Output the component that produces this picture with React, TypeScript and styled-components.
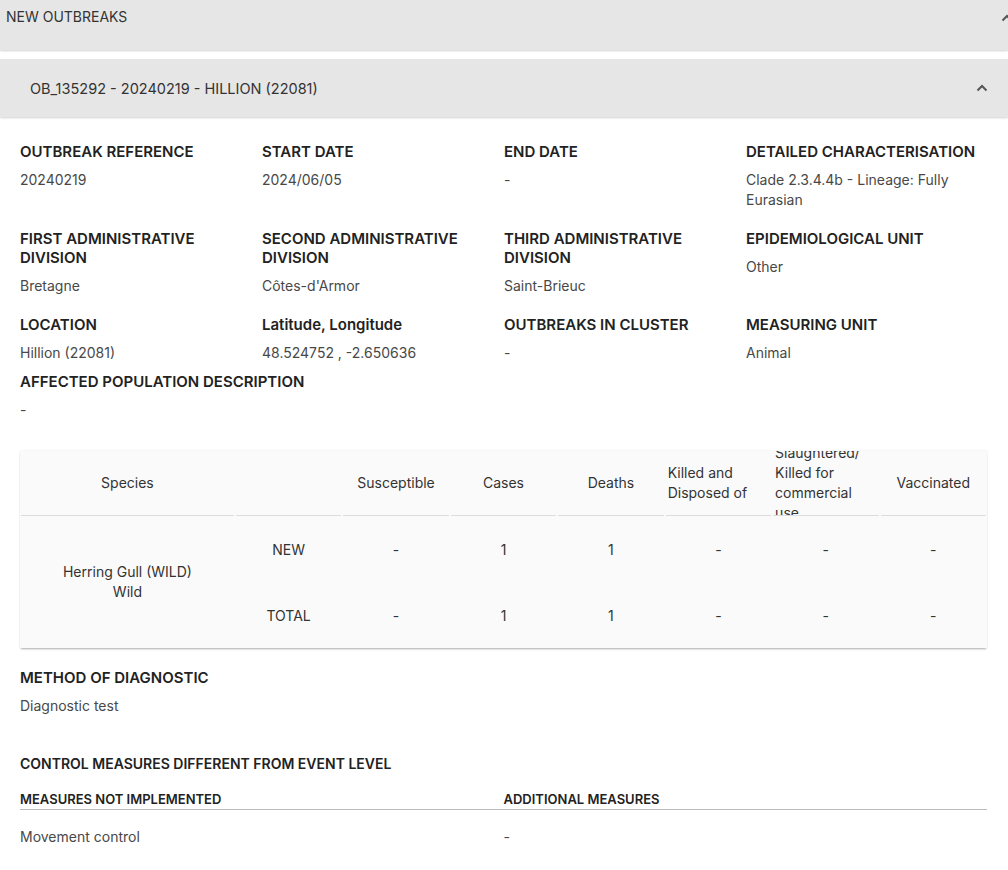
import React from "react";
import styled, { createGlobalStyle } from "styled-components";

const GlobalStyle = createGlobalStyle`
  html, body {
    margin: 0;
    padding: 0;
    background: #fff;
  }
  body {
    font-family: Inter, "Open Sans", sans-serif;
    color: #333;
  }
`;

interface Field {
  label: string;
  value: string;
}

const fields: Field[] = [
  { label: "OUTBREAK REFERENCE", value: "20240219" },
  { label: "START DATE", value: "2024/06/05" },
  { label: "END DATE", value: "-" },
  { label: "DETAILED CHARACTERISATION", value: "Clade 2.3.4.4b - Lineage: Fully Eurasian" },
  { label: "FIRST ADMINISTRATIVE DIVISION", value: "Bretagne" },
  { label: "SECOND ADMINISTRATIVE DIVISION", value: "Côtes-d'Armor" },
  { label: "THIRD ADMINISTRATIVE DIVISION", value: "Saint-Brieuc" },
  { label: "EPIDEMIOLOGICAL UNIT", value: "Other" },
  { label: "LOCATION", value: "Hillion (22081)" },
  { label: "Latitude, Longitude", value: "48.524752 , -2.650636" },
  { label: "OUTBREAKS IN CLUSTER", value: "-" },
  { label: "MEASURING UNIT", value: "Animal" },
];

const columns = [
  "Susceptible",
  "Cases",
  "Deaths",
  "Killed and Disposed of",
  "Slaughtered/ Killed for commercial use",
  "Vaccinated",
];

const rows = [
  { kind: "NEW", values: ["-", "1", "1", "-", "-", "-"] },
  { kind: "TOTAL", values: ["-", "1", "1", "-", "-", "-"] },
];

// 위쪽 화살표
const Chevron = () => (
  <svg width="12" height="8" viewBox="0 0 12 8">
    <path d="M1.5 6.5 L6 2 L10.5 6.5" fill="none" stroke="#555" strokeWidth="2" />
  </svg>
);

const App = () => {
  return (
    <Page>
      <GlobalStyle />
      <TopBar>
        <TopTitle>NEW OUTBREAKS</TopTitle>
        <TopChevron>
          <Chevron />
        </TopChevron>
      </TopBar>

      <PanelHeader>
        <PanelTitle>OB_135292 - 20240219 - HILLION (22081)</PanelTitle>
        <Chevron />
      </PanelHeader>

      <Content>
        <FieldGrid>
          {fields.map((f) => (
            <FieldCell key={f.label}>
              <Label>{f.label}</Label>
              <Value>{f.value}</Value>
            </FieldCell>
          ))}
        </FieldGrid>

        <WideField>
          <Label>AFFECTED POPULATION DESCRIPTION</Label>
          <Value>-</Value>
        </WideField>

        <TableCard>
          <HeadCell>
            <span>Species</span>
          </HeadCell>
          <HeadCell />
          {columns.map((c) => (
            <HeadCell key={c}>
              <span>{c}</span>
            </HeadCell>
          ))}

          <SpeciesCell>
            Herring Gull (WILD)
            <br />
            Wild
          </SpeciesCell>
          {rows.map((r) => (
            <React.Fragment key={r.kind}>
              <BodyCell>{r.kind}</BodyCell>
              {r.values.map((v, i) => (
                <BodyCell key={i}>{v}</BodyCell>
              ))}
            </React.Fragment>
          ))}
        </TableCard>

        <Section>
          <Label>METHOD OF DIAGNOSTIC</Label>
          <Value>Diagnostic test</Value>
        </Section>

        <MeasuresTitle>CONTROL MEASURES DIFFERENT FROM EVENT LEVEL</MeasuresTitle>
        <MeasuresGrid>
          <SubHead>MEASURES NOT IMPLEMENTED</SubHead>
          <SubHead>ADDITIONAL MEASURES</SubHead>
          <MeasureValue>Movement control</MeasureValue>
          <MeasureValue>-</MeasureValue>
        </MeasuresGrid>
      </Content>
    </Page>
  );
};

export default App;

const Page = styled.div`
  width: 1008px;
  min-height: 870px;
  overflow: hidden;
`;

const TopBar = styled.div`
  height: 50px;
  background: #e6e6e6;
  box-shadow: 0 1px 2px rgba(0, 0, 0, 0.18);
  display: flex;
  justify-content: space-between;
  align-items: flex-start;
  padding: 8px 0 0 6px;
  box-sizing: border-box;
  overflow: hidden;
`;

const TopTitle = styled.div`
  font-size: 14px;
  line-height: 18px;
  color: #333;
`;

const TopChevron = styled.div`
  margin-top: -2px;
  margin-right: -5px;
`;

const PanelHeader = styled.div`
  margin-top: 9px;
  height: 58px;
  background: #e6e6e6;
  box-shadow: 0 1px 2px rgba(0, 0, 0, 0.18);
  display: flex;
  align-items: center;
  justify-content: space-between;
  padding: 0 20px 0 30px;
  box-sizing: border-box;
`;

const PanelTitle = styled.div`
  font-size: 14.5px;
  color: #333;
`;

const Content = styled.div`
  padding: 25px 21px 20px 20px;
`;

const FieldGrid = styled.div`
  display: grid;
  grid-template-columns: repeat(4, 242px);
  row-gap: 19px;
`;

const FieldCell = styled.div`
  display: flex;
  flex-direction: column;
  gap: 9px;
  padding-right: 8px;
`;

const Label = styled.div`
  font-size: 15px;
  font-weight: 600;
  line-height: 19px;
  color: #222;
`;

const Value = styled.div`
  font-size: 14px;
  line-height: 20px;
  color: #484848;
`;

const WideField = styled(FieldCell)`
  margin-top: 9px;
`;

const TableCard = styled.div`
  margin-top: 31px;
  background: #fafafa;
  box-shadow: 0 2px 2px -1px rgba(0, 0, 0, 0.3), 0 0 2px rgba(0, 0, 0, 0.1);
  display: grid;
  grid-template-columns: 2fr repeat(7, 1fr);
  grid-template-rows: 65px 66px 66px;
`;

const HeadCell = styled.div`
  display: flex;
  align-items: center;
  justify-content: center;
  overflow: hidden;
  padding: 0 2px;
  margin: 0 1px;
  border-bottom: 1px solid #dcdcdc;
  font-size: 14px;
  line-height: 20px;
  color: #333;

  span {
    text-align: left;
  }
`;

const BodyCell = styled.div`
  display: flex;
  align-items: center;
  justify-content: center;
  font-size: 14px;
  color: #333;
`;

const SpeciesCell = styled(BodyCell)`
  grid-row: span 2;
  text-align: center;
  line-height: 20px;
`;

const Section = styled(FieldCell)`
  margin-top: 20px;
`;

const MeasuresTitle = styled(Label)`
  margin-top: 38px;
  font-size: 14px;
`;

const MeasuresGrid = styled.div`
  display: grid;
  grid-template-columns: 1fr 1fr;
  margin-top: 17px;
`;

const SubHead = styled.div`
  font-size: 13px;
  font-weight: 600;
  line-height: 18px;
  color: #222;
  border-bottom: 1px solid #bbb;
  padding-bottom: 1px;
`;

const MeasureValue = styled(Value)`
  margin-top: 17px;
`;
